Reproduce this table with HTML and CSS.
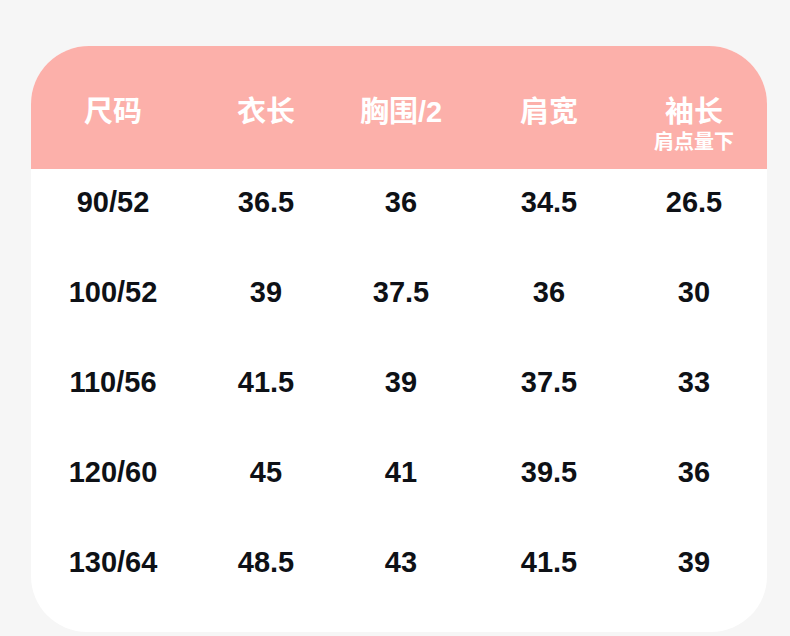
FILE: index.html
```html
<!DOCTYPE html>
<html lang="zh-CN">
<head>
<meta charset="utf-8">
<title>尺码表</title>
<link rel="stylesheet" href="styles.css">
</head>
<body>
<div class="page">
  <div class="card">
    <div class="head grid">
      <div class="hcell"><span class="hlabel">尺码</span></div>
      <div class="hcell"><span class="hlabel">衣长</span></div>
      <div class="hcell"><span class="hlabel">胸围/2</span></div>
      <div class="hcell"><span class="hlabel">肩宽</span></div>
      <div class="hcell"><span class="hlabel">袖长</span><span class="hsub">肩点量下</span></div>
    </div>
    <div class="body">
      <div class="row grid"><div>90/52</div><div>36.5</div><div>36</div><div>34.5</div><div>26.5</div></div>
      <div class="row grid"><div>100/52</div><div>39</div><div>37.5</div><div>36</div><div>30</div></div>
      <div class="row grid"><div>110/56</div><div>41.5</div><div>39</div><div>37.5</div><div>33</div></div>
      <div class="row grid"><div>120/60</div><div>45</div><div>41</div><div>39.5</div><div>36</div></div>
      <div class="row grid"><div>130/64</div><div>48.5</div><div>43</div><div>41.5</div><div>39</div></div>
    </div>
  </div>
</div>
</body>
</html>
```
FILE: styles.css
```css
html, body {
  margin: 0;
  padding: 0;
  background: #f6f6f6;
}
.page {
  padding: 46px 23px 4px 31px;
}
.card {
  width: 736px;
  height: 586px;
  background: #ffffff;
  border-radius: 58px 58px 56px 56px;
  overflow: hidden;
}
.grid {
  display: grid;
  grid-template-columns: 152px 154px 116px 180px 110px;
  padding-left: 6px;
}
.head {
  height: 123px;
  background: #fcb0aa;
  color: #ffffff;
  font-family: "Liberation Sans", "Noto Sans CJK SC", sans-serif;
  font-weight: 700;
  align-items: start;
}
.hcell {
  display: flex;
  flex-direction: column;
  align-items: center;
  padding-top: 48px;
}
.hlabel {
  font-size: 29px;
  line-height: 36px;
}
.hlabel-num {
  font-size: 30px;
}
.hsub {
  font-size: 20px;
  line-height: 20px;
  margin-top: 2px;
}
.body {
  display: flex;
  flex-direction: column;
  gap: 24px;
}
.row {
  height: 66px;
  align-items: center;
  justify-items: center;
  font-family: "Liberation Sans", Arial, sans-serif;
  font-weight: 700;
  font-size: 29px;
  color: #0e1116;
}
```
